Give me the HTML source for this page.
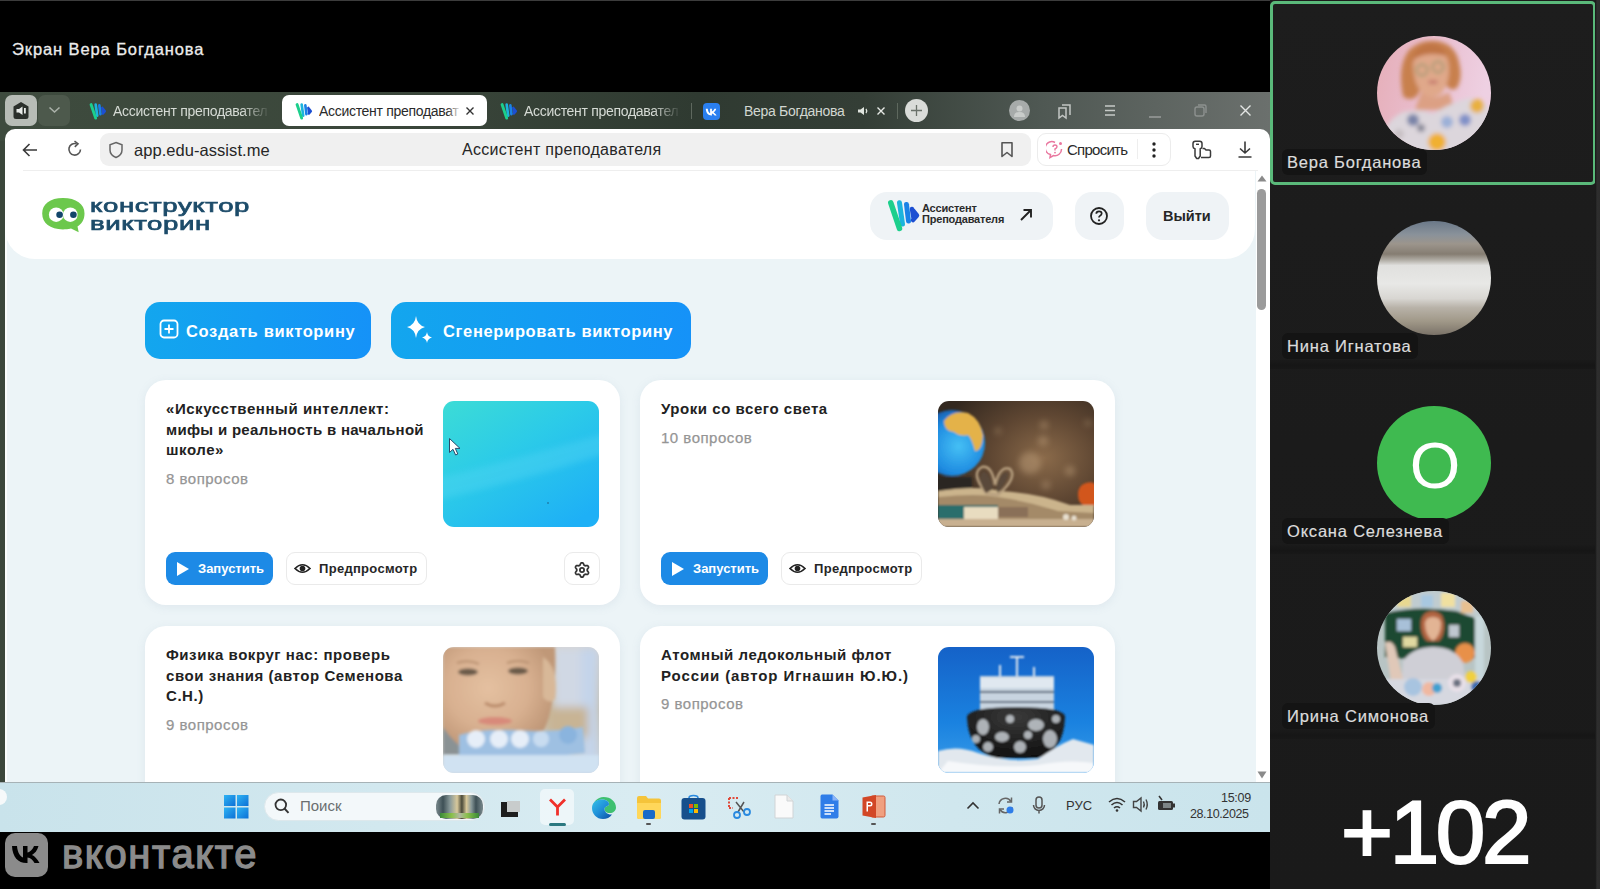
<!DOCTYPE html>
<html><head><meta charset="utf-8">
<style>
*{margin:0;padding:0;box-sizing:border-box}
html,body{width:1600px;height:889px;overflow:hidden;background:#000;font-family:"Liberation Sans",sans-serif}
.a{position:absolute}
#stage{position:relative;width:1600px;height:889px;background:#000}
.title{left:12px;top:40px;color:#ececec;font-size:16.5px;line-height:19px;letter-spacing:0.9px;-webkit-text-stroke:0.3px #ececec}
/* tab bar */
#tabbar{left:0;top:92px;width:1270px;height:38px;background:linear-gradient(90deg,#3e4b3e 0%,#3b473b 30%,#2f3a31 55%,#343e36 68%,#4f5853 82%,#6b706d 100%)}
#toolbar{left:5px;top:129px;width:1265px;height:42px;background:#fff;border-radius:10px 10px 0 0}
#page{left:5px;top:171px;width:1265px;height:612px;background:#ecf4f7;overflow:hidden}
#taskbar{left:0;top:782px;width:1270px;height:50px;background:linear-gradient(90deg,#c9e3eb 0%,#d2e8ef 30%,#d9ecf2 50%,#d0e7ee 75%,#cae4ec 100%)}
#panel{left:1270px;top:0;width:330px;height:889px;background:#171717}
.tile{position:absolute;left:2px;width:324px;height:183px;background:#202020}
.av{position:absolute;left:107px;width:114px;height:114px;border-radius:50%}
.lbl{position:absolute;left:12px;height:26px;padding:0 6px 0 5px;background:#141414;border-radius:6px;color:#dcdcdc;font-size:16.5px;line-height:26px;letter-spacing:0.8px;-webkit-text-stroke:0.2px #dcdcdc}
.tabt{top:10px;font-size:14px;line-height:18px;white-space:nowrap;overflow:hidden;letter-spacing:-0.3px}
.fade{-webkit-mask-image:linear-gradient(90deg,#000 82%,transparent 100%)}
.logo{font:18.5px/20px "Liberation Sans";color:#1d4c6a;letter-spacing:0.4px;-webkit-text-stroke:0.7px #1d4c6a;transform:scaleX(1.49);transform-origin:0 0}
.hbtn{top:21px;height:48px;background:#eff3f6;border-radius:17px}
.abtn{top:131px;height:57px;border-radius:15px;background:linear-gradient(90deg,#13a6ee,#1592f8)}
.atxt{top:150px;font:bold 16.5px/20px "Liberation Sans";color:#fff;letter-spacing:0.65px}
.card{width:475px;height:225px;background:#fff;border-radius:21px;box-shadow:0 2px 10px rgba(120,150,170,0.12)}
.ctitle{font:bold 15px/20.5px "Liberation Sans";color:#222;letter-spacing:0.55px;white-space:nowrap}
.ccount{font:15px/18px "Liberation Sans";color:#959595;letter-spacing:0.5px;-webkit-text-stroke:0.25px #959595;margin-top:-1px}
.cimg{width:156px;height:126px;border-radius:11px;overflow:hidden}
.runbtn{width:107px;height:33px;background:#1d8ae6;border-radius:9px}
.runtxt{font:bold 13px/17px "Liberation Sans";color:#fff}
.prvbtn{width:141px;height:33px;background:#fff;border:1px solid #eaeaea;border-radius:9px}
.prvtxt{font:bold 13px/17px "Liberation Sans";color:#262626;letter-spacing:0.3px}
</style></head>
<body><div id="stage">
<div class="a" style="left:0;top:0;width:1270px;height:1px;background:#3c3c3c"></div>
<div class="a title">Экран Вера Богданова</div>

<div class="a" id="tabbar">
  <div class="a" style="left:5px;top:3px;width:32px;height:31px;background:#b7bcb6;border-radius:7px"></div>
  <svg class="a" style="left:12px;top:9px" width="18" height="19" viewBox="0 0 18 19"><path d="M9 1 L16.5 5.5 V15.5 Q16.5 18 14 18 H4 Q1.5 18 1.5 15.5 V5.5 Z" fill="#2b302b"/><path d="M4.5 8 H7 L10.5 5.5 V14 L7 11.5 H4.5 Z" fill="#e8ebe8"/><rect x="12" y="7" width="1.8" height="5.5" fill="#e8ebe8"/></svg>
  <div class="a" style="left:38px;top:3px;width:32px;height:31px;background:#4d594c;border-radius:7px"></div>
  <svg class="a" style="left:48px;top:14px" width="13" height="8" viewBox="0 0 13 8"><path d="M1.5 1.5 L6.5 6 L11.5 1.5" stroke="#aab1a9" stroke-width="1.6" fill="none"/></svg>
  <svg class="a" style="left:88px;top:10px" width="19" height="19" viewBox="0 0 36 36"><g stroke-linecap="round" stroke-linejoin="round" fill="none"><path d="M27 11 L28.5 20 M28 12.5 L32 17.5 L28 22" stroke="#1c4fd2" stroke-width="4.5"/><path d="M21.5 6.5 L23.5 23" stroke="#1a82e6" stroke-width="5"/><path d="M14.5 4.8 L17.5 26" stroke="#1cb4dc" stroke-width="5"/><path d="M5.8 4.8 L14.5 30.5" stroke="#1ccf8c" stroke-width="5.5"/></g></svg>
  <div class="a tabt fade" style="left:113px;width:157px;color:#d6dbd5">Ассистент преподавател</div>
  <div class="a" style="left:282px;top:3px;width:205px;height:31px;background:#fff;border-radius:7px"></div>
  <svg class="a" style="left:294px;top:10px" width="19" height="19" viewBox="0 0 36 36"><g stroke-linecap="round" stroke-linejoin="round" fill="none"><path d="M27 11 L28.5 20 M28 12.5 L32 17.5 L28 22" stroke="#1c4fd2" stroke-width="4.5"/><path d="M21.5 6.5 L23.5 23" stroke="#1a82e6" stroke-width="5"/><path d="M14.5 4.8 L17.5 26" stroke="#1cb4dc" stroke-width="5"/><path d="M5.8 4.8 L14.5 30.5" stroke="#1ccf8c" stroke-width="5.5"/></g></svg>
  <div class="a tabt" style="left:319px;width:140px;color:#2a2a2a">Ассистент преподават</div>
  <div class="a" style="left:447px;top:8px;width:14px;height:22px;background:linear-gradient(90deg,rgba(255,255,255,0),#fff)"></div>
  <svg class="a" style="left:465px;top:14px" width="10" height="10" viewBox="0 0 10 10"><path d="M1.5 1.5 L8.5 8.5 M8.5 1.5 L1.5 8.5" stroke="#333" stroke-width="1.4"/></svg>
  <svg class="a" style="left:499px;top:10px" width="19" height="19" viewBox="0 0 36 36"><g stroke-linecap="round" stroke-linejoin="round" fill="none"><path d="M27 11 L28.5 20 M28 12.5 L32 17.5 L28 22" stroke="#1c4fd2" stroke-width="4.5"/><path d="M21.5 6.5 L23.5 23" stroke="#1a82e6" stroke-width="5"/><path d="M14.5 4.8 L17.5 26" stroke="#1cb4dc" stroke-width="5"/><path d="M5.8 4.8 L14.5 30.5" stroke="#1ccf8c" stroke-width="5.5"/></g></svg>
  <div class="a tabt fade" style="left:524px;width:157px;color:#d6dbd5">Ассистент преподавател</div>
  <div class="a" style="left:691px;top:11px;width:1px;height:16px;background:#5e685e"></div>
  <div class="a" style="left:703px;top:11px;width:17px;height:17px;background:#2a7ff0;border-radius:4px"></div>
  <svg class="a" style="left:705px;top:15px" width="13" height="10" viewBox="0 0 33 24"><path d="M2 4 H7 C7.5 11 10.5 14.5 13 15.5 V4 H17.5 V10.5 C20 10 23 7 24 4 H28.5 C27.5 8.5 24.5 11.5 22 13 C24.5 14 27.5 17 29.5 21 H24.5 C23 18 20.5 15.5 17.5 15.5 V21 H16.5 C8 21 2.5 15 2 4 Z" fill="#fff"/></svg>
  <div class="a tabt" style="left:744px;width:110px;color:#d2d7d1">Вера Богданова</div>
  <svg class="a" style="left:857px;top:14px" width="13" height="10" viewBox="0 0 13 10"><path d="M1 3.5 H3.5 L7 1 V9 L3.5 6.5 H1 Z" fill="#dfe4de"/><path d="M9 3 Q10.5 5 9 7" stroke="#dfe4de" stroke-width="1.3" fill="none"/></svg>
  <svg class="a" style="left:876px;top:14px" width="10" height="10" viewBox="0 0 10 10"><path d="M1.5 1.5 L8.5 8.5 M8.5 1.5 L1.5 8.5" stroke="#e6e9e5" stroke-width="1.4"/></svg>
  <div class="a" style="left:897px;top:11px;width:1px;height:16px;background:#5e685e"></div>
  <div class="a" style="left:905px;top:7px;width:23px;height:23px;background:#dadcd9;border-radius:50%"></div>
  <svg class="a" style="left:909px;top:11px" width="15" height="15" viewBox="0 0 15 15"><path d="M7.5 2 V13 M2 7.5 H13" stroke="#6a716a" stroke-width="1.3"/></svg>
  <div class="a" style="left:1009px;top:8px;width:21px;height:21px;background:#a7abaa;border-radius:50%"></div>
  <svg class="a" style="left:1012px;top:11px" width="15" height="15" viewBox="0 0 15 15"><circle cx="7.5" cy="5.5" r="3" fill="#c9ccca"/><path d="M2 14 Q2 9 7.5 9 Q13 9 13 14 Z" fill="#c9ccca"/></svg>
  <svg class="a" style="left:1056px;top:10px" width="18" height="18" viewBox="0 0 18 18"><path d="M3 6 H10 V16 L6.5 13.5 L3 16 Z" stroke="#c2c6c3" stroke-width="1.5" fill="none"/><path d="M6 3 H14 V13" stroke="#c2c6c3" stroke-width="1.5" fill="none"/></svg>
  <svg class="a" style="left:1103px;top:12px" width="14" height="13" viewBox="0 0 14 13"><path d="M2 2 H12 M2 6.5 H12 M2 11 H12" stroke="#c6cac7" stroke-width="1.5"/></svg>
  <div class="a" style="left:1149px;top:24px;width:12px;height:1.5px;background:#8a8e8c"></div>
  <svg class="a" style="left:1193px;top:11px" width="15" height="15" viewBox="0 0 15 15"><rect x="2" y="4" width="9" height="9" rx="2" stroke="#8d918f" stroke-width="1.4" fill="none"/><path d="M5 2 H11.5 Q13 2 13 3.5 V10" stroke="#8d918f" stroke-width="1.4" fill="none"/></svg>
  <svg class="a" style="left:1239px;top:12px" width="13" height="13" viewBox="0 0 13 13"><path d="M1.5 1.5 L11.5 11.5 M11.5 1.5 L1.5 11.5" stroke="#e4e6e5" stroke-width="1.4"/></svg>
</div>
<div class="a" style="left:0;top:129px;width:5px;height:653px;background:#3b473b"></div>
<div class="a" style="left:0;top:129px;width:1270px;height:12px;background:linear-gradient(90deg,#3e4b3e 0%,#3b473b 30%,#2f3a31 55%,#343e36 68%,#4f5853 82%,#6b706d 100%)"></div>
<div class="a" id="toolbar">
  <svg class="a" style="left:16px;top:13px" width="18" height="16" viewBox="0 0 18 16"><path d="M16 8 H2.5 M8.5 2 L2.5 8 L8.5 14" stroke="#3a3a3a" stroke-width="1.6" fill="none"/></svg>
  <svg class="a" style="left:61px;top:11px" width="18" height="18" viewBox="0 0 18 18"><path d="M14.5 9.5 A5.8 5.8 0 1 1 10.5 3.8" stroke="#555" stroke-width="1.6" fill="none"/><path d="M8.5 1 L12 3.8 L8.8 6.8" stroke="#555" stroke-width="1.6" fill="none"/></svg>
  <div class="a" style="left:95px;top:4px;width:931px;height:33px;background:#f0f0f0;border-radius:9px"></div>
  <svg class="a" style="left:103px;top:12px" width="16" height="18" viewBox="0 0 16 18"><path d="M8 1.5 L14 3.8 V9 Q14 14 8 16.5 Q2 14 2 9 V3.8 Z" stroke="#666" stroke-width="1.5" fill="none"/></svg>
  <div class="a" style="left:129px;top:11px;font-size:16.5px;line-height:20px;color:#262626;letter-spacing:0.05px">app.edu-assist.me</div>
  <div class="a" style="left:457px;top:11px;font-size:16px;line-height:20px;color:#262626;letter-spacing:0.3px">Ассистент преподавателя</div>
  <svg class="a" style="left:995px;top:12px" width="14" height="17" viewBox="0 0 14 17"><path d="M2 1.8 H12 V15.5 L7 11.5 L2 15.5 Z" stroke="#555" stroke-width="1.6" fill="none" stroke-linejoin="round"/></svg>
  <div class="a" style="left:1032px;top:4px;width:134px;height:33px;background:#fff;border:1px solid #ececec;border-radius:9px"></div>
  <svg class="a" style="left:1041px;top:11px" width="18" height="19" viewBox="0 0 18 19"><path d="M9 2.5 A6.5 6.5 0 1 0 4.5 14.5 L4 17.5 L7.5 15.5 A6.5 6.5 0 0 0 15.5 9" stroke="#e9779f" stroke-width="1.5" fill="none"/><path d="M7 7 Q7 5 9 5 Q11 5 11 6.8 Q11 8 9 9 V10.5" stroke="#e9779f" stroke-width="1.4" fill="none"/><circle cx="9" cy="12.6" r="0.9" fill="#e9779f"/><circle cx="14.5" cy="3.5" r="1.5" fill="#e9779f"/></svg>
  <div class="a" style="left:1062px;top:11px;font-size:15px;line-height:20px;color:#2a2a2a;letter-spacing:-0.75px">Спросить</div>
  <div class="a" style="left:1132px;top:10px;width:1px;height:20px;background:#eee"></div>
  <svg class="a" style="left:1146px;top:12px" width="6" height="18" viewBox="0 0 6 18"><circle cx="3" cy="3" r="1.7" fill="#222"/><circle cx="3" cy="9" r="1.7" fill="#222"/><circle cx="3" cy="15" r="1.7" fill="#222"/></svg>
  <svg class="a" style="left:1186px;top:11px" width="21" height="20" viewBox="0 0 21 20"><path d="M2 3.5 Q2 1.2 4.3 1.2 H8.7 Q11 1.2 11 3.5 V6.5 Q11 8.3 9.2 8.8 V16 L7.5 18.5 H5.7 L4 16 V8.8 Q2 8.3 2 6.5 Z" stroke="#3a3a3a" stroke-width="1.5" fill="none" stroke-linejoin="round"/><path d="M5 4.3 H8" stroke="#3a3a3a" stroke-width="1.4"/><path d="M11.5 8.5 H13.5 L15 10 H18 Q19.5 10 19.5 11.5 V16 Q19.5 17.5 18 17.5 H10" stroke="#3a3a3a" stroke-width="1.5" fill="none" stroke-linejoin="round"/></svg>
  <svg class="a" style="left:1232px;top:11px" width="16" height="19" viewBox="0 0 16 19"><path d="M8 1.5 V13 M3 8.5 L8 13 L13 8.5 M1.5 17 H14.5" stroke="#3a3a3a" stroke-width="1.6" fill="none"/></svg>
  <div class="a" style="left:18px;top:41px;width:1235px;height:1px;background:#eeeeee"></div>
</div>
<div class="a" id="page">
  <div class="a" style="left:0;top:0;width:2px;height:612px;background:#fbfdfd"></div>
  <div class="a" style="left:0;top:0;width:1250px;height:88px;background:#fff;border-radius:0 0 30px 30px"></div>
  <!-- logo -->
  <svg class="a" style="left:36px;top:25px" width="46" height="38" viewBox="0 0 46 38"><path d="M22 2 C35 2 43.5 8 43.5 17.5 C43.5 24 40.5 28 36.5 30.5 L37.7 36.2 L30 32.6 C27 33.2 24.5 33.4 22 33.4 C9 33.4 1.2 27 1.2 17.5 C1.2 8 9 2 22 2 Z" fill="#6cc84c"/><circle cx="15.2" cy="18.7" r="7.3" fill="#fff"/><circle cx="29.3" cy="18.7" r="7.3" fill="#fff"/><circle cx="18.6" cy="18.7" r="3.3" fill="#12466a"/><circle cx="32.4" cy="18.7" r="3.3" fill="#12466a"/></svg>
  <div class="a logo" style="left:85px;top:25px">конструктор</div>
  <div class="a logo" style="left:85px;top:43px">викторин</div>
  <!-- header buttons -->
  <div class="a hbtn" style="left:865px;width:183px"></div>
  <svg class="a" style="left:880px;top:27px" width="36" height="36" viewBox="0 0 36 36"><g stroke-linecap="round" stroke-linejoin="round" fill="none"><path d="M27 11 L28.5 20 M28 12.5 L32 17.5 L28 22" stroke="#1c4fd2" stroke-width="4.5"/><path d="M21.5 6.5 L23.5 23" stroke="#1a82e6" stroke-width="5"/><path d="M14.5 4.8 L17.5 26" stroke="#1cb4dc" stroke-width="5"/><path d="M5.8 4.8 L14.5 30.5" stroke="#1ccf8c" stroke-width="5.5"/></g></svg>
  <div class="a" style="left:917px;top:32px;font:bold 11px/11px 'Liberation Sans';color:#2b2b2b;letter-spacing:-0.2px">Ассистент<br>Преподавателя</div>
  <svg class="a" style="left:1014px;top:37px" width="14" height="14" viewBox="0 0 14 14"><path d="M2 12 L12 2 M4.5 2 H12 V9.5" stroke="#222" stroke-width="1.9" fill="none"/></svg>
  <div class="a hbtn" style="left:1070px;width:49px"></div>
  <svg class="a" style="left:1084px;top:35px" width="20" height="20" viewBox="0 0 20 20"><circle cx="10" cy="10" r="8" stroke="#222" stroke-width="1.8" fill="none"/><path d="M7.3 7.8 Q7.3 5.3 10 5.3 Q12.7 5.3 12.7 7.6 Q12.7 9 10.8 9.9 Q10 10.3 10 11.6" stroke="#222" stroke-width="1.7" fill="none"/><circle cx="10" cy="14.3" r="1.1" fill="#222"/></svg>
  <div class="a hbtn" style="left:1141px;width:83px"></div>
  <div class="a" style="left:1158px;top:36px;font:bold 14.5px/18px 'Liberation Sans';color:#262626">Выйти</div>
<div class="a card" style="left:140px;top:209px"></div>
<div class="a ctitle" style="left:161px;top:228px">«Искусственный интеллект:<br><span style="letter-spacing:0.3px">мифы и реальность в начальной</span><br>школе»</div>
<div class="a ccount" style="left:161px;top:300px">8 вопросов</div>
<div class="a cimg" style="left:438px;top:230px"><svg width="156" height="126" viewBox="0 0 156 126"><defs><linearGradient id="cy1" x1="0" y1="0" x2="0.8" y2="1"><stop offset="0" stop-color="#3cdcd6"/><stop offset="0.45" stop-color="#2ccbe8"/><stop offset="1" stop-color="#1eb0f6"/></linearGradient><filter id="fbw"><feGaussianBlur stdDeviation="3"/></filter></defs>
<rect width="156" height="126" fill="url(#cy1)"/>
<path d="M-10 78 Q60 62 170 30 L170 50 Q80 80 -10 100 Z" fill="#5ad8f4" opacity="0.35" filter="url(#fbw)"/>
<circle cx="105" cy="102" r="0.8" fill="#1a5a80"/></svg></div>

<div class="a runbtn" style="left:161px;top:381px"></div>
<svg class="a" style="left:171px;top:390px" width="14" height="16" viewBox="0 0 14 16"><path d="M1 1 L13 8 L1 15 Z" fill="#fff"/></svg>
<div class="a runtxt" style="left:193px;top:389px">Запустить</div>
<div class="a prvbtn" style="left:281px;top:381px"></div>
<svg class="a" style="left:289px;top:391px" width="17" height="13" viewBox="0 0 17 13"><path d="M1 6.5 Q8.5 -1 16 6.5 Q8.5 14 1 6.5 Z" stroke="#222" stroke-width="1.6" fill="none"/><circle cx="8.5" cy="6.5" r="2.8" fill="#222"/></svg>
<div class="a prvtxt" style="left:314px;top:389px">Предпросмотр</div>
<div class="a prvbtn" style="left:559px;top:381px;width:36px"></div>
<svg class="a" style="left:568px;top:390px" width="18" height="18" viewBox="0 0 18 18"><path d="M14.20 9.00 L14.19 9.34 L14.24 9.69 L14.59 10.11 L14.99 10.60 L15.34 11.15 L15.58 11.72 L15.46 12.18 L15.24 12.60 L14.99 13.00 L14.65 13.33 L14.04 13.42 L13.38 13.38 L12.76 13.29 L12.21 13.19 L11.89 13.32 L11.60 13.50 L11.30 13.66 L11.02 13.88 L10.83 14.40 L10.60 14.99 L10.31 15.57 L9.93 16.06 L9.47 16.18 L9.00 16.20 L8.53 16.18 L8.07 16.06 L7.69 15.57 L7.40 14.99 L7.17 14.40 L6.98 13.88 L6.70 13.66 L6.40 13.50 L6.11 13.32 L5.79 13.19 L5.24 13.29 L4.62 13.38 L3.96 13.42 L3.35 13.33 L3.01 13.00 L2.76 12.60 L2.54 12.18 L2.42 11.72 L2.66 11.15 L3.01 10.60 L3.41 10.11 L3.76 9.69 L3.81 9.34 L3.80 9.00 L3.81 8.66 L3.76 8.31 L3.41 7.89 L3.01 7.40 L2.66 6.85 L2.42 6.28 L2.54 5.82 L2.76 5.40 L3.01 5.00 L3.35 4.67 L3.96 4.58 L4.62 4.62 L5.24 4.71 L5.79 4.81 L6.11 4.68 L6.40 4.50 L6.70 4.34 L6.98 4.12 L7.17 3.60 L7.40 3.01 L7.69 2.43 L8.07 1.94 L8.53 1.82 L9.00 1.80 L9.47 1.82 L9.93 1.94 L10.31 2.43 L10.60 3.01 L10.83 3.60 L11.02 4.12 L11.30 4.34 L11.60 4.50 L11.89 4.68 L12.21 4.81 L12.76 4.71 L13.38 4.62 L14.04 4.58 L14.65 4.67 L14.99 5.00 L15.24 5.40 L15.46 5.82 L15.58 6.28 L15.34 6.85 L14.99 7.40 L14.59 7.89 L14.24 8.31 L14.19 8.66 Z" stroke="#333" stroke-width="1.7" fill="none" stroke-linejoin="round"/><circle cx="9" cy="9" r="2.1" stroke="#333" stroke-width="1.8" fill="none"/></svg>
<div class="a card" style="left:635px;top:209px"></div>
<div class="a ctitle" style="left:656px;top:228px">Уроки со всего света</div>
<div class="a ccount" style="left:656px;top:259px">10 вопросов</div>
<div class="a cimg" style="left:933px;top:230px"><svg width="156" height="126" viewBox="0 0 156 126"><defs>
<radialGradient id="bg2" cx="0.68" cy="0.45" r="0.7"><stop offset="0" stop-color="#8a6a4a"/><stop offset="0.5" stop-color="#5e4632"/><stop offset="1" stop-color="#33281f"/></radialGradient>
<radialGradient id="gl2" cx="0.6" cy="0.55" r="0.6"><stop offset="0" stop-color="#45c0f5"/><stop offset="0.7" stop-color="#1e8ae0"/><stop offset="1" stop-color="#1a5aa8"/></radialGradient>
<filter id="bl1"><feGaussianBlur stdDeviation="0.8"/></filter><filter id="bl3"><feGaussianBlur stdDeviation="3"/></filter></defs>
<rect width="156" height="126" fill="url(#bg2)"/>
<g filter="url(#bl3)" fill="#d8b890" opacity="0.35"><circle cx="106" cy="24" r="4"/><circle cx="105" cy="40" r="5"/><circle cx="92" cy="62" r="11"/><circle cx="132" cy="70" r="5"/><circle cx="108" cy="84" r="4"/><circle cx="150" cy="22" r="3"/><circle cx="60" cy="30" r="3"/></g>
<g filter="url(#bl1)">
<circle cx="14" cy="42" r="33" fill="url(#gl2)"/>
<path d="M6 20 Q14 9 30 12 Q42 18 45 34 Q44 50 37 50 Q34 38 30 34 Q22 36 16 31 Q6 30 6 20 Z" fill="#e4b24a"/>
<path d="M0 76 H34 V96 H0 Z" fill="#2c2520"/>
<path d="M148 82 Q160 78 162 95 Q160 108 150 106 Q140 104 140 94 Q140 84 148 82 Z" fill="#d2561e"/>
<path d="M0 90 Q40 84 62 90 Q100 92 132 104 H156 V118 H0 Z" fill="#cbb48c"/>
<path d="M0 96 Q40 92 60 96 Q90 100 120 110 L156 112 V118 H0 Z" fill="#a48a68"/>
<path d="M48 92 Q32 72 44 66 Q54 64 57 84 Q62 64 72 68 Q80 76 60 94 Z" fill="none" stroke="#b8a080" stroke-width="2.5"/>
<path d="M48 92 Q38 78 45 70 Q52 72 55 88 Z M60 92 Q70 78 70 72 Q62 70 58 88 Z" fill="#5a4a3a"/>
<rect x="0" y="104" width="60" height="16" fill="#2a6e6c"/>
<rect x="26" y="106" width="34" height="12" fill="#e8dcc0"/>
<rect x="60" y="106" width="30" height="10" fill="#8a7058"/>
<rect x="0" y="118" width="156" height="8" fill="#c8b090"/>
<circle cx="128" cy="116" r="3" fill="#e8e0d0"/><circle cx="136" cy="117" r="2.5" fill="#e8e0d0"/>
</g></svg></div>
<div class="a runbtn" style="left:656px;top:381px"></div>
<svg class="a" style="left:666px;top:390px" width="14" height="16" viewBox="0 0 14 16"><path d="M1 1 L13 8 L1 15 Z" fill="#fff"/></svg>
<div class="a runtxt" style="left:688px;top:389px">Запустить</div>
<div class="a prvbtn" style="left:776px;top:381px"></div>
<svg class="a" style="left:784px;top:391px" width="17" height="13" viewBox="0 0 17 13"><path d="M1 6.5 Q8.5 -1 16 6.5 Q8.5 14 1 6.5 Z" stroke="#222" stroke-width="1.6" fill="none"/><circle cx="8.5" cy="6.5" r="2.8" fill="#222"/></svg>
<div class="a prvtxt" style="left:809px;top:389px">Предпросмотр</div>
<div class="a card" style="left:140px;top:455px"></div>
<div class="a ctitle" style="left:161px;top:474px">Физика вокруг нас: проверь<br>свои знания (автор Семенова<br>С.Н.)</div>
<div class="a ccount" style="left:161px;top:546px">9 вопросов</div>
<div class="a cimg" style="left:438px;top:476px"><svg width="156" height="126" viewBox="0 0 156 126"><defs>
<radialGradient id="fc3" cx="0.4" cy="0.38" r="0.6"><stop offset="0" stop-color="#e4c0a0"/><stop offset="0.6" stop-color="#d8b090"/><stop offset="1" stop-color="#c09878"/></radialGradient>
<linearGradient id="bk3" x1="0" y1="0" x2="0" y2="1"><stop offset="0" stop-color="#d8d4d0"/><stop offset="0.5" stop-color="#c8b898"/><stop offset="1" stop-color="#d0d8e0"/></linearGradient>
<filter id="bl2"><feGaussianBlur stdDeviation="1.6"/></filter><filter id="bl4"><feGaussianBlur stdDeviation="4"/></filter></defs>
<rect width="156" height="126" fill="url(#bk3)"/>
<g filter="url(#bl4)"><rect x="110" y="0" width="46" height="60" fill="#d0d8e4"/><rect x="138" y="0" width="18" height="126" fill="#c4d4ea"/><rect x="105" y="60" width="40" height="30" fill="#c8b494"/></g>
<g filter="url(#bl2)">
<path d="M0 0 H112 Q114 40 106 70 Q98 100 70 108 H20 Q0 100 0 80 Z" fill="url(#fc3)"/>
<path d="M100 10 Q116 20 112 52 Q106 58 100 50 Z" fill="#d8b898"/>
<path d="M0 80 Q10 96 30 108 H0 Z" fill="#8a9294"/>
<ellipse cx="25" cy="25" rx="10" ry="3.5" fill="#6a5a48"/><ellipse cx="75" cy="24" rx="10" ry="3.5" fill="#6a5a48"/>
<path d="M14 16 Q25 12 36 17" stroke="#b89070" stroke-width="2" fill="none"/><path d="M64 16 Q75 12 86 16" stroke="#b89070" stroke-width="2" fill="none"/>
<path d="M42 56 Q52 62 62 56" stroke="#b88868" stroke-width="3" fill="none"/>
<ellipse cx="52" cy="74" rx="17" ry="4" fill="#d88a7a"/>
</g>
<g filter="url(#bl2)">
<path d="M16 88 Q40 80 90 84 Q120 84 140 80 L142 106 Q100 112 16 108 Z" fill="#9ec0e2"/>
<circle cx="33" cy="92" r="9" fill="#e6eef8"/><circle cx="56" cy="92" r="9" fill="#e6eef8"/><circle cx="77" cy="92" r="9" fill="#e6eef8"/><circle cx="98" cy="92" r="8" fill="#c8dcf0"/><circle cx="125" cy="88" r="9" fill="#8ab4de"/>
<rect x="0" y="108" width="156" height="18" fill="#d0e2f2"/>
</g></svg></div>
<div class="a card" style="left:635px;top:455px"></div>
<div class="a ctitle" style="left:656px;top:474px">Атомный ледокольный флот<br><span style="letter-spacing:0.9px">России (автор Игнашин Ю.Ю.)</span></div>
<div class="a ccount" style="left:656px;top:525px">9 вопросов</div>
<div class="a cimg" style="left:933px;top:476px"><svg width="156" height="126" viewBox="0 0 156 126"><defs>
<linearGradient id="sk4" x1="0" y1="0" x2="0" y2="1"><stop offset="0" stop-color="#1562c8"/><stop offset="0.6" stop-color="#1a82e0"/><stop offset="1" stop-color="#3a9ce8"/></linearGradient>
<radialGradient id="hl4" cx="0.5" cy="0.2" r="0.8"><stop offset="0" stop-color="#3a3a3a"/><stop offset="1" stop-color="#101010"/></radialGradient>
<filter id="bl5"><feGaussianBlur stdDeviation="0.9"/></filter></defs>
<rect width="156" height="126" fill="url(#sk4)"/>
<g filter="url(#bl5)">
<path d="M72 10 H86 M79 10 V30 M62 18 V30 M96 20 V30" stroke="#dfe6ee" stroke-width="2"/>
<rect x="42" y="29" width="74" height="36" fill="#c8d4e0"/>
<rect x="42" y="31" width="74" height="10" fill="#e0e8f0"/>
<path d="M42 45 H116 M42 55 H116" stroke="#58687a" stroke-width="2"/>
<path d="M29 70 Q30 60 79 60 Q127 60 127 70 Q126 104 100 111 H58 Q30 104 29 70 Z" fill="url(#hl4)"/>
<g fill="#d0d6dc" opacity="0.8"><ellipse cx="45" cy="80" rx="6" ry="8"/><ellipse cx="64" cy="90" rx="7" ry="5"/><ellipse cx="98" cy="78" rx="8" ry="6"/><ellipse cx="112" cy="92" rx="7" ry="9"/><circle cx="82" cy="100" r="6"/><circle cx="50" cy="100" r="5"/><circle cx="90" cy="88" r="4"/><circle cx="118" cy="72" r="4"/><circle cx="72" cy="72" r="4"/><circle cx="38" cy="92" r="4"/></g>
<path d="M0 104 Q20 98 40 106 Q70 116 100 112 Q120 98 135 92 L156 98 V126 H0 Z" fill="#e2e8ee"/>
<path d="M10 114 Q60 122 100 118 Q130 112 156 116 V126 H0 Z" fill="#f6f8fa"/>
</g></svg></div>
<svg class="a" style="left:443px;top:266px" width="14" height="20" viewBox="0 0 14 20"><path d="M1.5 1.5 V15.5 L5 12.3 L7.6 18 L9.8 17 L7.3 11.4 L12 11.4 Z" fill="#fff" stroke="#2a4a6a" stroke-width="1"/></svg>
  <!-- scrollbar -->
  <div class="a" style="left:1251px;top:0;width:14px;height:612px;background:#fff"></div>
  <svg class="a" style="left:1252px;top:4px" width="10" height="7" viewBox="0 0 10 7"><path d="M0.5 6.5 L5 0.5 L9.5 6.5 Z" fill="#8a8a8a"/></svg>
  <div class="a" style="left:1252px;top:18px;width:9px;height:121px;background:#9b9b9b;border-radius:5px"></div>
  <svg class="a" style="left:1252px;top:600px" width="10" height="8" viewBox="0 0 10 8"><path d="M0.5 0.5 L9.5 0.5 L5 7.5 Z" fill="#8a8a8a"/></svg>
  <!-- action buttons -->
  <div class="a abtn" style="left:140px;width:226px"></div>
  <svg class="a" style="left:154px;top:148px" width="20" height="20" viewBox="0 0 20 20"><rect x="1.5" y="1.5" width="17" height="17" rx="3.5" stroke="#fff" stroke-width="1.8" fill="none"/><path d="M10 5.5 V14.5 M5.5 10 H14.5" stroke="#fff" stroke-width="1.8"/></svg>
  <div class="a atxt" style="left:181px">Создать викторину</div>
  <div class="a abtn" style="left:386px;width:300px"></div>
  <svg class="a" style="left:400px;top:144px" width="30" height="30" viewBox="0 0 30 30"><path d="M11 1 Q12 10 20 12 Q12 14 11 23 Q10 14 2 12 Q10 10 11 1 Z" fill="#fff"/><path d="M22 17 Q22.6 21.5 27 22.5 Q22.6 23.5 22 28 Q21.4 23.5 17 22.5 Q21.4 21.5 22 17 Z" fill="#fff"/></svg>
  <div class="a atxt" style="left:438px">Сгенерировать викторину</div>
</div>
<div class="a" id="taskbar">
  <div class="a" style="left:0;top:0;width:1270px;height:1px;background:#a6b2b6"></div>
  <div class="a" style="left:-9px;top:7px;width:16px;height:16px;border-radius:50%;background:#f6f9fa"></div>
  <svg class="a" style="left:224px;top:13px" width="25" height="24" viewBox="0 0 25 24"><defs><linearGradient id="wg" x1="0" y1="0" x2="1" y2="1"><stop offset="0" stop-color="#2fb4f4"/><stop offset="1" stop-color="#0c6fd6"/></linearGradient></defs><rect x="0" y="0" width="11.5" height="11" fill="url(#wg)"/><rect x="13" y="0" width="11.5" height="11" fill="url(#wg)"/><rect x="0" y="12.5" width="11.5" height="11" fill="url(#wg)"/><rect x="13" y="12.5" width="11.5" height="11" fill="url(#wg)"/></svg>
  <div class="a" style="left:264px;top:10px;width:221px;height:29px;background:#f3f8fa;border-radius:15px;border:1px solid #dde8ec"></div>
  <svg class="a" style="left:274px;top:16px" width="16" height="17" viewBox="0 0 16 17"><circle cx="6.8" cy="6.8" r="5.3" stroke="#333" stroke-width="1.8" fill="none"/><path d="M10.5 10.5 L14.5 14.8" stroke="#333" stroke-width="1.9"/></svg>
  <div class="a" style="left:300px;top:15px;font:15px/18px 'Liberation Sans';color:#6a6e70">Поиск</div>
  <div class="a" style="left:436px;top:13px;width:47px;height:24px;border-radius:10px;background:linear-gradient(90deg,#7a8a8e 0%,#3e5056 15%,#8a9a9a 30%,#d8c89a 45%,#4a4a3a 55%,#d8c89a 65%,#8a9a9a 75%,#3e5056 85%,#7a8a8e 100%)"></div>
  <div class="a" style="left:440px;top:31px;width:39px;height:5px;background:linear-gradient(90deg,#3a8a3a,#8ac04a 30%,#b0b8a0 50%,#8ac04a 70%,#3a8a3a)"></div>
  <div class="a" style="left:501px;top:20px;width:12px;height:15px;background:#1e1e1e"></div>
  <div class="a" style="left:507px;top:19px;width:13px;height:11px;background:#c8cccc"></div>
  <div class="a" style="left:501px;top:30px;width:17px;height:5px;background:#1e1e1e"></div>
  <div class="a" style="left:540px;top:7px;width:34px;height:36px;background:rgba(255,255,255,0.55);border-radius:5px"></div>
  <svg class="a" style="left:548px;top:16px" width="19" height="18" viewBox="0 0 19 18"><path d="M2 1.5 L9.5 9 L17 1.5 M9.5 9 V17.5" stroke="#f0302a" stroke-width="2.8" fill="none"/></svg>
  <div class="a" style="left:549px;top:41px;width:17px;height:3px;background:#2b7880;border-radius:2px"></div>
  <svg class="a" style="left:590px;top:14px" width="27" height="24" viewBox="0 0 27 24"><defs><linearGradient id="eg" x1="0" y1="0" x2="1" y2="1"><stop offset="0" stop-color="#35c1e8"/><stop offset="0.5" stop-color="#1f8fd8"/><stop offset="1" stop-color="#0a4aa0"/></linearGradient></defs><path d="M13.5 1 C21 1 26 6 26 11.5 C26 15 23 17 20 17 C16 17 14 15 14.5 12.5 C15 10 19 10.5 19 8 C19 5 15.5 3.5 12 3.5 C6 3.5 2.5 8 2 12 C3 6 7.5 1 13.5 1 Z" fill="#3ec070"/><path d="M2 12 C2 6 7 3.5 12 3.5 C15.5 3.5 19 5 19 8 C19 10.5 15 10 14.5 12.5 C14 16 18 19 22 18.5 C20 21.5 16.5 23 13 23 C6.5 23 2 18 2 12 Z" fill="url(#eg)"/></svg>
  <svg class="a" style="left:636px;top:13px" width="26" height="25" viewBox="0 0 26 25"><path d="M1 3 Q1 1 3 1 H10 L12 3.5 H23 Q25 3.5 25 5.5 V22 Q25 24 23 24 H3 Q1 24 1 22 Z" fill="#f5c43a"/><path d="M1 8 H25 V22 Q25 24 23 24 H3 Q1 24 1 22 Z" fill="#ffd75a"/><rect x="7" y="15" width="12" height="9" rx="2" fill="#1a6ac8"/></svg>
  <div class="a" style="left:646px;top:41px;width:5px;height:2px;background:#555;border-radius:1px"></div>
  <svg class="a" style="left:681px;top:12px" width="25" height="26" viewBox="0 0 25 26"><path d="M8 4 Q8 1.5 12.5 1.5 Q17 1.5 17 4" stroke="#2a8ae0" stroke-width="1.6" fill="none"/><rect x="0.5" y="4" width="24" height="21.5" rx="3" fill="#174f8c"/><rect x="8" y="10" width="4" height="4" fill="#f25022"/><rect x="13" y="10" width="4" height="4" fill="#7fba00"/><rect x="8" y="15" width="4" height="4" fill="#00a4ef"/><rect x="13" y="15" width="4" height="4" fill="#ffb900"/></svg>
  <svg class="a" style="left:727px;top:14px" width="26" height="24" viewBox="0 0 26 24"><path d="M2 2 H12 M2 2 V12 M2 12 H6" stroke="#e04a3a" stroke-width="2" stroke-dasharray="2 1.5" fill="none"/><path d="M9 6 L17 16 M17 6 L11 16" stroke="#555" stroke-width="1.5"/><circle cx="10" cy="19" r="3" stroke="#2a8ae0" stroke-width="1.8" fill="none"/><circle cx="20" cy="16" r="3" stroke="#2a8ae0" stroke-width="1.8" fill="none"/></svg>
  <svg class="a" style="left:774px;top:12px" width="20" height="25" viewBox="0 0 20 25"><path d="M1 1 H13 L19 7 V24 H1 Z" fill="#fafafa" stroke="#d0d4d6" stroke-width="1"/><path d="M13 1 V7 H19" fill="#eaeaea" stroke="#d0d4d6" stroke-width="1"/></svg>
  <svg class="a" style="left:820px;top:12px" width="19" height="25" viewBox="0 0 19 25"><path d="M2 0.5 H12.5 L18.5 6.5 V22.5 Q18.5 24.5 16.5 24.5 H2 Q0.5 24.5 0.5 22.5 V2.5 Q0.5 0.5 2 0.5 Z" fill="#2f7de8"/><path d="M12.5 0.5 V6.5 H18.5" fill="#8ab4f8"/><path d="M4.5 11 H14 M4.5 14 H14 M4.5 17 H14 M4.5 20 H11" stroke="#fff" stroke-width="1.5"/></svg>
  <svg class="a" style="left:862px;top:12px" width="24" height="25" viewBox="0 0 24 25"><rect x="9" y="2" width="14" height="21" rx="1.5" fill="#f0a080" stroke="#d05a3a" stroke-width="1"/><path d="M0.5 3.5 L14 1 V24 L0.5 21.5 Z" fill="#d24726"/><path d="M4.5 7.5 H8 Q10.5 7.5 10.5 10 Q10.5 12.5 8 12.5 H6 V17.5 H4.5 Z M6 9 V11 H8 Q9 11 9 10 Q9 9 8 9 Z" fill="#fff"/></svg>
  <div class="a" style="left:871px;top:41px;width:5px;height:2px;background:#555;border-radius:1px"></div>
  <svg class="a" style="left:966px;top:19px" width="14" height="9" viewBox="0 0 14 9"><path d="M1.5 7.5 L7 2 L12.5 7.5" stroke="#333" stroke-width="1.6" fill="none"/></svg>
  <svg class="a" style="left:996px;top:14px" width="19" height="19" viewBox="0 0 19 19"><path d="M3 8 A6.5 6.5 0 0 1 15 5.5 M16 11 A6.5 6.5 0 0 1 4 13.5" stroke="#666" stroke-width="1.5" fill="none"/><path d="M15.5 1.5 V6 H11" stroke="#666" stroke-width="1.5" fill="none"/><path d="M3.5 17.5 V13 H8" stroke="#666" stroke-width="1.5" fill="none"/><circle cx="14" cy="14" r="3.5" fill="#2f7de8"/></svg>
  <svg class="a" style="left:1032px;top:14px" width="14" height="19" viewBox="0 0 14 19"><rect x="4" y="1" width="6" height="11" rx="3" stroke="#555" stroke-width="1.5" fill="none"/><path d="M1.5 9 A5.5 5.5 0 0 0 12.5 9 M7 14.5 V17.5" stroke="#555" stroke-width="1.5" fill="none"/></svg>
  <div class="a" style="left:1066px;top:16px;font:13px/16px 'Liberation Sans';color:#333">РУС</div>
  <svg class="a" style="left:1108px;top:15px" width="18" height="15" viewBox="0 0 18 15"><path d="M1 5 Q9 -2 17 5 M3.5 8 Q9 3 14.5 8 M6 11 Q9 8.5 12 11" stroke="#333" stroke-width="1.6" fill="none"/><circle cx="9" cy="13.5" r="1.3" fill="#333"/></svg>
  <svg class="a" style="left:1132px;top:14px" width="19" height="17" viewBox="0 0 19 17"><path d="M1.5 5.5 H4.5 L9 2 V15 L4.5 11.5 H1.5 Z" stroke="#444" stroke-width="1.4" fill="none"/><path d="M11.5 5.5 Q13 8.5 11.5 11.5 M14 3.5 Q16.5 8.5 14 13.5" stroke="#444" stroke-width="1.4" fill="none"/></svg>
  <svg class="a" style="left:1157px;top:13px" width="19" height="17" viewBox="0 0 19 17"><rect x="1" y="6" width="15" height="9" rx="1.5" fill="#333"/><rect x="16" y="8.5" width="2" height="4" fill="#333"/><path d="M2 1 L5 5" stroke="#333" stroke-width="1.5"/><rect x="6" y="8" width="8" height="5" fill="#c8d8dc" opacity="0.5"/></svg>
  <div class="a" style="left:1221px;top:9px;font:12.5px/15px 'Liberation Sans';color:#333;letter-spacing:-0.3px">15:09</div>
  <div class="a" style="left:1190px;top:25px;font:12.5px/15px 'Liberation Sans';color:#333;letter-spacing:-0.4px">28.10.2025</div>
</div>
<div class="a" style="left:5px;top:833px;width:43px;height:44px;background:#8b8b8b;border-radius:10px"></div>
<svg class="a" style="left:10px;top:842px" width="33" height="24" viewBox="0 0 33 24"><path d="M2 4 H7 C7.5 11 10.5 14.5 13 15.5 V4 H17.5 V10.5 C20 10 23 7 24 4 H28.5 C27.5 8.5 24.5 11.5 22 13 C24.5 14 27.5 17 29.5 21 H24.5 C23 18 20.5 15.5 17.5 15.5 V21 H16.5 C8 21 2.5 15 2 4 Z" fill="#000"/></svg>
<div class="a" style="left:62px;top:831px;font:40px/46px 'Liberation Sans';color:#8b8b8b;letter-spacing:1.6px;-webkit-text-stroke:1.3px #8b8b8b">вконтакте</div>

<div class="a" id="panel">
  <div class="a" style="left:0;top:0;width:326px;height:889px;background:linear-gradient(180deg,#1d1d1d 0%,#1b1b1b 50%,#1a1a1a 100%)"></div>
  <div class="a" style="left:0;top:1px;width:326px;height:184px;border:3px solid #5ab97a;border-radius:5px"></div>
  <div class="a" style="left:325px;top:0;width:5px;height:889px;background:linear-gradient(90deg,#151515 0,#2e2e2e 40%,#2c2c2c 100%)"></div>
  <div class="a" style="left:0;top:360px;width:325px;height:9px;background:linear-gradient(180deg,#1a1a1a,#161616 60%,#181818)"></div>
  <div class="a" style="left:0;top:545px;width:325px;height:9px;background:linear-gradient(180deg,#1a1a1a,#161616 60%,#181818)"></div>
  <div class="a" style="left:0;top:730px;width:325px;height:9px;background:linear-gradient(180deg,#1a1a1a,#161616 60%,#181818)"></div>
  <!-- avatar 1 -->
  <svg class="a" style="left:107px;top:36px" width="114" height="114" viewBox="0 0 114 114"><defs><clipPath id="c1"><circle cx="57" cy="57" r="57"/></clipPath>
  <linearGradient id="pk1" x1="0" y1="0" x2="1" y2="0.2"><stop offset="0" stop-color="#e6aeb8"/><stop offset="0.55" stop-color="#e9bfd0"/><stop offset="1" stop-color="#eed0e2"/></linearGradient>
  <filter id="fb1"><feGaussianBlur stdDeviation="2"/></filter></defs>
  <g clip-path="url(#c1)"><rect width="114" height="114" fill="url(#pk1)"/>
  <g filter="url(#fb1)">
  <path d="M26 60 Q20 30 32 14 Q44 3 60 5 Q78 8 82 26 Q86 42 80 52 Q74 56 70 50 L44 50 Q42 62 34 63 Q28 63 26 60 Z" fill="#c8804e"/>
  <path d="M36 28 Q38 13 54 12 Q70 13 72 30 Q73 48 64 58 Q55 64 46 58 Q36 48 36 28 Z" fill="#e0a88a"/>
  <path d="M34 26 Q46 14 70 20 Q66 8 52 8 Q38 10 34 26 Z" fill="#c07444"/>
  <circle cx="45" cy="34" r="5.5" fill="none" stroke="#9a9a70" stroke-width="1.8"/><circle cx="61" cy="31" r="5.5" fill="none" stroke="#9a9a70" stroke-width="1.8"/>
  <ellipse cx="56" cy="46" rx="5" ry="1.8" fill="#c07068"/>
  <path d="M44 56 Q56 66 72 56 L78 74 H38 Z" fill="#dca084"/>
  <path d="M0 120 Q4 86 26 76 Q44 72 56 78 Q70 68 92 62 Q112 64 114 80 V120 Z" fill="#dcd6dc"/>
  <circle cx="36" cy="84" r="6" fill="#7a84a8"/><circle cx="44" cy="92" r="4" fill="#8a8a9a"/><circle cx="70" cy="86" r="6" fill="#9cb0d8"/><circle cx="88" cy="84" r="6" fill="#8090c8"/><circle cx="100" cy="70" r="7" fill="#e8b040"/><circle cx="60" cy="106" r="9" fill="#f0b030"/><circle cx="22" cy="98" r="5" fill="#c8c0c4"/>
  </g></g></svg>
  <div class="lbl" style="top:149px">Вера Богданова</div>
  <!-- avatar 2 -->
  <svg class="a" style="left:107px;top:221px" width="114" height="114" viewBox="0 0 114 114"><defs><clipPath id="c2"><circle cx="57" cy="57" r="57"/></clipPath>
  <linearGradient id="sk2" x1="0" y1="0" x2="0" y2="1"><stop offset="0" stop-color="#6a7888"/><stop offset="0.12" stop-color="#8a929a"/><stop offset="0.2" stop-color="#9c958c"/><stop offset="0.29" stop-color="#857d72"/><stop offset="0.34" stop-color="#aeaaa2"/><stop offset="0.39" stop-color="#e0e0de"/><stop offset="0.55" stop-color="#e8e8e6"/><stop offset="0.68" stop-color="#d8d6d2"/><stop offset="0.76" stop-color="#b8b2a8"/><stop offset="0.88" stop-color="#a09888"/><stop offset="1" stop-color="#7a7268"/></linearGradient>
  <filter id="fb2"><feGaussianBlur stdDeviation="2"/></filter></defs>
  <g clip-path="url(#c2)"><rect width="114" height="114" fill="url(#sk2)"/>
  
  </g></svg>
  <div class="lbl" style="top:333px">Нина Игнатова</div>
  <!-- avatar 3 -->
  <div class="av" style="top:406px;background:radial-gradient(circle,#3fba50 80%,#37a847 100%)"></div>
  <div class="a" style="left:108px;top:430px;width:114px;text-align:center;font:65px/72px 'Liberation Sans';color:#fff">O</div>
  <div class="lbl" style="top:518px">Оксана Селезнева</div>
  <!-- avatar 4 -->
  <svg class="a" style="left:107px;top:591px" width="114" height="114" viewBox="0 0 114 114"><defs><clipPath id="c4"><circle cx="57" cy="57" r="57"/></clipPath>
  <filter id="fb4"><feGaussianBlur stdDeviation="1.4"/></filter></defs>
  <g clip-path="url(#c4)"><rect width="114" height="114" fill="#b8c4c4"/>
  <g filter="url(#fb4)">
  <rect x="0" y="0" width="114" height="24" fill="#c0ccd0"/>
  <rect x="20" y="2" width="14" height="14" fill="#e8d890"/><rect x="44" y="4" width="12" height="12" fill="#a8c8e0"/><rect x="64" y="2" width="14" height="14" fill="#f0e0a0"/><rect x="84" y="10" width="12" height="12" fill="#e8c090"/>
  <path d="M8 22 Q40 14 80 20 L104 30 L104 66 L80 70 L30 68 L8 66 Z" fill="#1f4a33"/>
  <rect x="20" y="28" width="14" height="12" fill="#a8c0d8"/><rect x="26" y="46" width="14" height="10" fill="#e0d8a0"/><rect x="72" y="34" width="10" height="12" fill="#c0c8d0"/>
  <rect x="98" y="25" width="9" height="75" fill="#c8d8dc"/>
  <circle cx="88" cy="62" r="10" fill="#e8904a"/>
  <path d="M44 30 Q46 20 56 20 Q66 21 67 32 Q68 44 62 50 H50 Q43 44 44 30 Z" fill="#b26440"/>
  <path d="M48 32 Q49 26 56 26 Q63 26 64 32 Q64 44 56 50 Q48 44 48 32 Z" fill="#e2b494"/>
  <path d="M26 70 Q36 56 56 56 Q78 56 86 72 L90 100 H24 Z" fill="#cfcfd6"/>
  <path d="M8 52 Q14 48 18 56 L26 88 L14 90 Z" fill="#e0c8b8"/>
  <rect x="0" y="88" width="114" height="26" fill="#d6d8e0"/>
  <circle cx="36" cy="96" r="9" fill="#a8c4e0"/><circle cx="52" cy="98" r="7" fill="#f0b8a0"/><circle cx="60" cy="97" r="5" fill="#40a0d0"/><circle cx="80" cy="92" r="9" fill="#e8e0e8"/><circle cx="80" cy="92" r="4" fill="#6a7080"/><circle cx="94" cy="86" r="6" fill="#f0d040"/><circle cx="100" cy="96" r="6" fill="#3a6ab0"/>
  </g></g></svg>
  <div class="lbl" style="top:703px">Ирина Симонова</div>
  <div class="a" style="left:71px;top:780px;font:89px/104px 'Liberation Sans';color:#fff;letter-spacing:-3.3px;-webkit-text-stroke:2.2px #fff">+102</div>
</div>
</div></body></html>
